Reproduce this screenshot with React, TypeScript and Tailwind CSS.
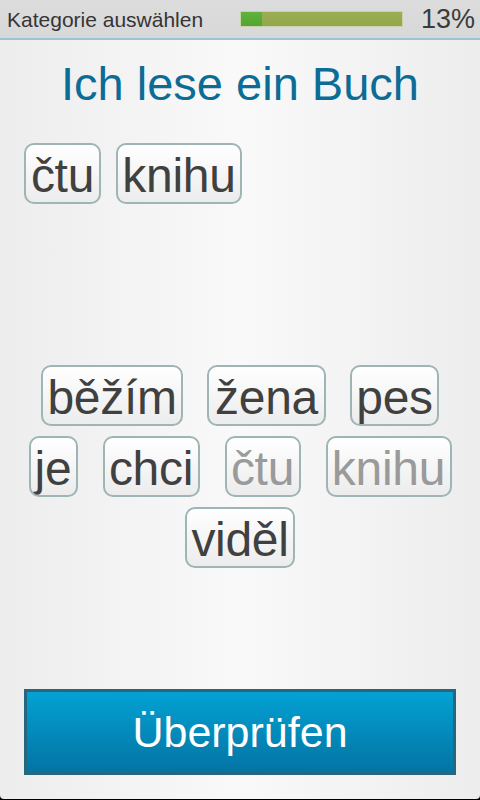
import React from "react";

type Tile = { t: string; w: string; dim?: boolean };

const row1: Tile[] = [
  { t: "běžím", w: "w-[142px]" },
  { t: "žena", w: "w-[119px]" },
  { t: "pes", w: "w-[89px]" },
];
const row2: Tile[] = [
  { t: "je", w: "w-[49px]" },
  { t: "chci", w: "w-[97px]" },
  { t: "čtu", w: "w-[76px]", dim: true },
  { t: "knihu", w: "w-[126px]", dim: true },
];
const row3: Tile[] = [{ t: "viděl", w: "w-[110px]" }];

function WordTile({ tile }: { tile: Tile }) {
  return (
    <div
      className={`${tile.w} h-[61px] shrink-0 overflow-hidden whitespace-nowrap rounded-[10px] border-2 border-[#9fb4b4] bg-gradient-to-b from-[#ffffff] to-[#ececec] pt-[7px] text-center text-[48px] leading-[48px] tracking-[-0.3px] ${
        tile.dim ? "text-[#9a9a9a]" : "text-[#404040]"
      }`}
    >
      {tile.t}
    </div>
  );
}

export default function App() {
  const font = { fontFamily: '"Liberation Sans", Arial, sans-serif' };
  return (
    <div className="w-[480px] h-[800px] bg-black" style={font}>
      <div className="flex h-[799px] flex-col overflow-hidden rounded-b-[4px] bg-gradient-to-r from-[#ededed] via-[#f9f9f9] to-[#ededed]">
        {/* header */}
        <div className="flex h-[40px] shrink-0 items-center border-b-2 border-[#9cc4d4] bg-gradient-to-b from-[#dcdcdc] to-[#d8d8d8] pl-[7px] pr-[5px]">
          <div className="w-[233px] text-[21px] leading-none text-[#353535]">Kategorie auswählen</div>
          <div className="relative h-[16px] w-[163px] overflow-hidden border border-[#c8d4a8] bg-gradient-to-b from-[#9aae52] to-[#94a64c]">
            <div className="absolute left-0 top-0 h-full w-[21px] bg-gradient-to-b from-[#5fb23a] to-[#52a532]" />
          </div>
          <div className="flex-1 text-right text-[27px] leading-none text-[#3a3a3a]">13%</div>
        </div>

        {/* title */}
        <div className="mt-[20px] text-center text-[47px] leading-[47px] text-[#0b6c96]">Ich lese ein Buch</div>

        {/* answer area */}
        <div className="mt-[36px] flex h-[222px] shrink-0 items-start gap-[15px] px-[24px]">
          <WordTile tile={{ t: "čtu", w: "w-[77px]" }} />
          <WordTile tile={{ t: "knihu", w: "w-[126px]" }} />
        </div>

        {/* choices */}
        <div className="flex flex-col items-center gap-[10px]">
          <div className="flex justify-center gap-[24px]">
            {row1.map((t, i) => (
              <WordTile key={i} tile={t} />
            ))}
          </div>
          <div className="flex justify-center gap-[25px]">
            {row2.map((t, i) => (
              <WordTile key={i} tile={t} />
            ))}
          </div>
          <div className="flex justify-center gap-[24px]">
            {row3.map((t, i) => (
              <WordTile key={i} tile={t} />
            ))}
          </div>
        </div>

        {/* button */}
        <div className="mt-auto mb-[24px] px-[24px]">
          <div className="flex h-[86px] items-center justify-center border-[3px] border-[#27667f] bg-gradient-to-b from-[#03a2d3] to-[#0374a4] text-[43px] leading-none text-white">
            Überprüfen
          </div>
        </div>
      </div>
    </div>
  );
}
